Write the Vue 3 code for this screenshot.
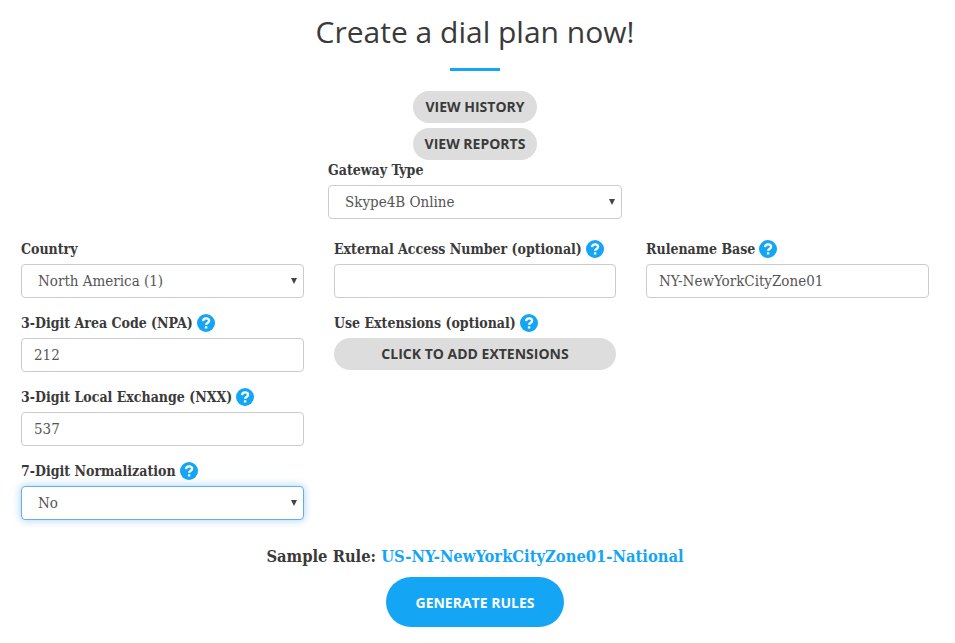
<script setup>
const left = [
  { label: '3-Digit Area Code (NPA)', value: '212' },
  { label: '3-Digit Local Exchange (NXX)', value: '537' }
]
</script>

<template>
  <div class="page">
    <h1 class="title">Create a dial plan now!</h1>
    <div class="divider"></div>

    <div class="top-actions">
      <button class="pill">VIEW HISTORY</button>
      <button class="pill">VIEW REPORTS</button>
    </div>

    <div class="gateway">
      <label class="lbl">Gateway Type</label>
      <div class="sel">
        <select class="ctl">
          <option>Skype4B Online</option>
        </select>
      </div>
    </div>

    <div class="cols">
      <div class="col">
        <div class="field">
          <label class="lbl">Country</label>
          <div class="sel">
            <select class="ctl">
              <option>North America (1)</option>
            </select>
          </div>
        </div>
        <div v-for="f in left" :key="f.label" class="field">
          <label class="lbl">{{ f.label }}
            <svg class="help" viewBox="0 0 18 18"><circle cx="9" cy="9" r="9" fill="#14a5f5" /><path d="M6 7.100c.1-1.800 1.400-2.800 3.100-2.800 1.700 0 3 1 3 2.400 0 2.300-3 2.200-3 4.100" fill="none" stroke="#fff" stroke-width="2.300" /><rect x="7.900" y="12.300" width="2.400" height="2.200" fill="#fff" /></svg>
          </label>
          <input class="ctl" :value="f.value" />
        </div>
        <div class="field">
          <label class="lbl">7-Digit Normalization
            <svg class="help" viewBox="0 0 18 18"><circle cx="9" cy="9" r="9" fill="#14a5f5" /><path d="M6 7.100c.1-1.800 1.400-2.800 3.100-2.800 1.700 0 3 1 3 2.400 0 2.300-3 2.200-3 4.100" fill="none" stroke="#fff" stroke-width="2.300" /><rect x="7.900" y="12.300" width="2.400" height="2.200" fill="#fff" /></svg>
          </label>
          <div class="sel">
            <select class="ctl focused">
              <option>No</option>
            </select>
          </div>
        </div>
      </div>

      <div class="col">
        <div class="field">
          <label class="lbl">External Access Number (optional)
            <svg class="help" viewBox="0 0 18 18"><circle cx="9" cy="9" r="9" fill="#14a5f5" /><path d="M6 7.100c.1-1.800 1.400-2.800 3.100-2.800 1.700 0 3 1 3 2.400 0 2.300-3 2.200-3 4.100" fill="none" stroke="#fff" stroke-width="2.300" /><rect x="7.900" y="12.300" width="2.400" height="2.200" fill="#fff" /></svg>
          </label>
          <input class="ctl" />
        </div>
        <div class="field">
          <label class="lbl">Use Extensions (optional)
            <svg class="help" viewBox="0 0 18 18"><circle cx="9" cy="9" r="9" fill="#14a5f5" /><path d="M6 7.100c.1-1.800 1.400-2.800 3.100-2.800 1.700 0 3 1 3 2.400 0 2.300-3 2.200-3 4.100" fill="none" stroke="#fff" stroke-width="2.300" /><rect x="7.900" y="12.300" width="2.400" height="2.200" fill="#fff" /></svg>
          </label>
          <button class="pill wide">CLICK TO ADD EXTENSIONS</button>
        </div>
      </div>

      <div class="col">
        <div class="field">
          <label class="lbl">Rulename Base
            <svg class="help" viewBox="0 0 18 18"><circle cx="9" cy="9" r="9" fill="#14a5f5" /><path d="M6 7.100c.1-1.800 1.400-2.800 3.100-2.800 1.700 0 3 1 3 2.400 0 2.300-3 2.200-3 4.100" fill="none" stroke="#fff" stroke-width="2.300" /><rect x="7.900" y="12.300" width="2.400" height="2.200" fill="#fff" /></svg>
          </label>
          <input class="ctl" value="NY-NewYorkCityZone01" />
        </div>
      </div>
    </div>

    <p class="sample">Sample Rule: <span class="rule">US-NY-NewYorkCityZone01-National</span></p>
    <button class="generate">GENERATE RULES</button>
  </div>
</template>

<style>
html, body { background: #fff; }
</style>

<style scoped>
.page {
  width: 950px;
  display: flex;
  flex-direction: column;
  align-items: center;
  color: #333;
  font-family: "DejaVu Serif Condensed", "DejaVu Serif", serif;
}
.title {
  margin: 10px 0 0;
  font: 400 30px/44px "Open Sans", sans-serif;
  color: #3a3a3a;
}
.divider {
  width: 50px;
  height: 3px;
  margin-top: 14px;
  background: #14a5f5;
}
.top-actions {
  margin-top: 20px;
  display: flex;
  flex-direction: column;
  gap: 5px;
}
.pill {
  width: 124px;
  height: 32px;
  padding: 0;
  border: 0;
  border-radius: 16px;
  background: #ddd;
  color: #3a3a3a;
  font: 700 14px/32px "Open Sans", sans-serif;
}
.gateway {
  width: 294px;
  margin-top: 1px;
}
.lbl {
  display: flex;
  align-items: center;
  gap: 4px;
  height: 18px;
  margin-bottom: 6px;
  font: 700 14px/18px "DejaVu Serif Condensed", "DejaVu Serif", serif;
  color: #3a3a3a;
  white-space: nowrap;
}
.sel {
  position: relative;
}
.sel::after {
  content: "";
  position: absolute;
  right: 7px;
  top: 14px;
  border-style: solid;
  border-width: 6px 3px 0;
  border-color: #444 transparent transparent;
  pointer-events: none;
}
.ctl {
  display: block;
  width: 100%;
  height: 34px;
  box-sizing: border-box;
  padding: 0 12px;
  border: 1px solid #ccc;
  border-radius: 4px;
  background: #fff;
  color: #555;
  font: 400 15px "DejaVu Serif Condensed", "DejaVu Serif", serif;
  outline: none;
}
select.ctl {
  appearance: none;
  padding-left: 16px;
}
.focused {
  border-color: #66afe9;
  box-shadow: 0 0 8px rgba(102, 175, 233, .6);
}
.cols {
  width: 100%;
  box-sizing: border-box;
  padding: 0 21px;
  margin-top: 21px;
  display: grid;
  grid-template-columns: 283px 282px 283px;
  column-gap: 30px;
}
.field { margin-bottom: 16px; }
.field:last-child { margin-bottom: 0; }
.help {
  width: 18px;
  height: 18px;
  flex: none;
}
.wide {
  width: 100%;
}
.sample {
  margin: 27px 0 0;
  font: 700 16.4px/20px "DejaVu Serif Condensed", "DejaVu Serif", serif;
  color: #3a3a3a;
}
.rule { color: #14a5f5; }
.generate {
  width: 178px;
  height: 50px;
  margin-top: 10px;
  border: 0;
  border-radius: 25px;
  background: #14a5f5;
  color: #fff;
  font: 700 14px "Open Sans", sans-serif;
}
</style>
